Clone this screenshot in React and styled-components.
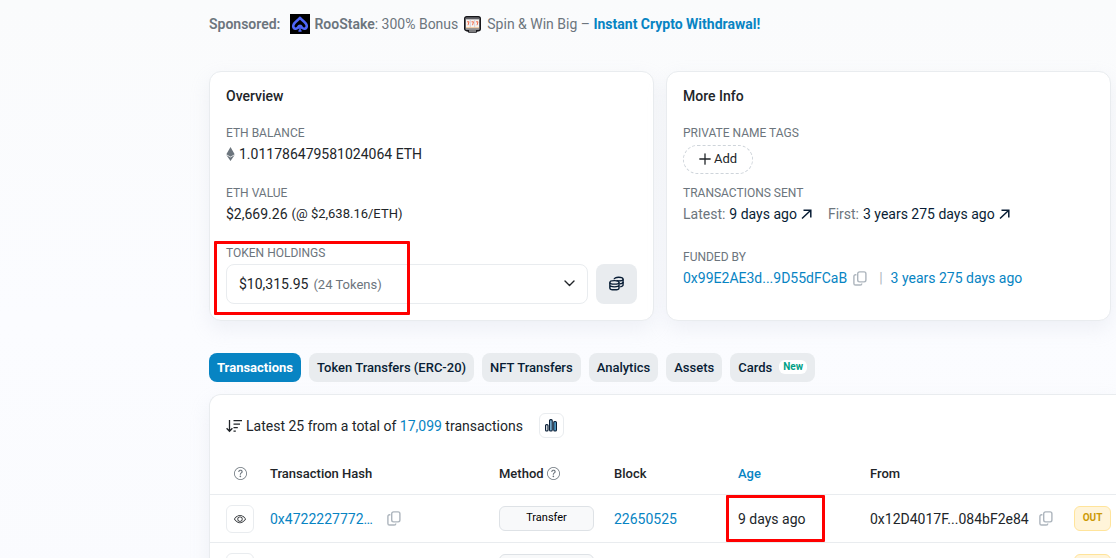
import React from 'react';
import styled, { createGlobalStyle, css } from 'styled-components';
import { FaEthereum } from 'react-icons/fa';
import { BsQuestionCircle, BsEye } from 'react-icons/bs';

const colors = {
  text: '#212529',
  dark: '#081d35',
  muted: '#6c757d',
  link: '#0784c3',
  border: '#e9ecef',
  faint: '#adb5bd',
  mark: '#ff0000',
};

const GlobalStyle = createGlobalStyle`
  * {
    box-sizing: border-box;
  }

  body {
    margin: 0;
    overflow-x: hidden;
    background: linear-gradient(#fafbfc, #fbfcff 320px, #fafbfe);
    color: ${colors.text};
    font-family: Roboto, "Liberation Sans", sans-serif;
    font-size: 14px;
    line-height: 20px;
    scrollbar-width: none;
  }

  button {
    font-family: inherit;
    color: inherit;
    cursor: pointer;
  }

  a {
    color: ${colors.link};
    text-decoration: none;
  }

  svg {
    display: block;
    flex: none;
  }
`

const Page = styled.main`
  padding: 14px 0 0 209px;
`

const Sponsored = styled.div`
  display: flex;
  align-items: center;
  gap: 4px;
  height: 20px;
  margin-bottom: 37px;
  color: ${colors.muted};
  white-space: nowrap;

  b {
    font-weight: 600;
  }

  a {
    font-weight: 700;
  }
`

const SponsorLabel = styled.b`
  margin-right: 6px;
`

const SponsorLine = styled.span`
  display: flex;
  align-items: center;
  gap: 6px;
`

const Cards = styled.div`
  display: grid;
  grid-template-columns: 1fr 1fr;
  gap: 12px;
  margin-right: 5px;
`

const panel = css`
  background: #fff;
  border: 1px solid ${colors.border};
  border-radius: 12px;
  box-shadow: 0 8px 19px rgba(189, 197, 209, 0.2);
`

const Card = styled.section`
  ${panel}
  padding: 14px 16px 16px;
`

const CardTitle = styled.h3`
  margin: 0 0 17px;
  font-size: 14px;
  font-weight: 500;
  line-height: 20px;
`

const Field = styled.div`
  position: relative;
  margin-bottom: ${({ $gap = 19 }) => $gap}px;

  &:last-child {
    margin-bottom: 0;
  }
`

const FieldLabel = styled.h4`
  margin: 0;
  color: ${colors.muted};
  font-size: 12px;
  font-weight: 400;
  line-height: 20px;
  text-transform: uppercase;
`

const Line = styled.div`
  display: flex;
  align-items: center;
  gap: ${({ $gap = 4 }) => $gap}px;
  min-height: 20px;
  white-space: nowrap;

  ${Field} & {
    margin-top: 1px;
  }
`

const EthIcon = styled(FaEthereum)`
  width: 9px;
  height: 14px;
  color: ${colors.muted};
`

const Small = styled.span`
  font-size: 13px;
`

const Muted = styled.span`
  color: ${colors.muted};
`

const TokenCount = styled(Small)`
  padding-top: 1px;
  color: ${colors.muted};
`

const DarkLink = styled.a`
  display: flex;
  align-items: center;
  gap: 4px;
  margin-right: 12px;
  color: ${colors.dark};
`

const Divider = styled.span`
  margin: 0 4px 0 8px;
  color: ${colors.faint};
`

const Holdings = styled.div`
  display: flex;
  gap: 8px;
  margin-top: 1px;
`

const Dropdown = styled.button`
  display: flex;
  flex: 1;
  align-items: center;
  gap: 5px;
  height: 40px;
  padding: 0 12px 1px;
  background: #fff;
  border: 1px solid ${colors.border};
  border-radius: 8px;
  font-size: 14px;

  svg {
    margin-left: auto;
  }
`

const WalletButton = styled.button`
  display: grid;
  place-items: center;
  width: 41px;
  height: 40px;
  padding: 0 0 2px;
  background: ${colors.border};
  border: 0;
  border-radius: 8px;
  color: ${colors.dark};
`

const AddButton = styled.button`
  display: flex;
  align-items: center;
  justify-content: center;
  gap: 3px;
  width: 70px;
  height: 29px;
  margin: 2px 0 9px;
  padding: 0 0 2px;
  background: #fff;
  border: 1px dashed #ced4da;
  border-radius: 15px;
  font-size: 13px;
`

/* red marker drawn round a value */
const Marker = styled.span`
  position: absolute;
  inset: ${({ $inset }) => $inset};
  width: ${({ $width }) => $width}px;
  border: 3px solid ${colors.mark};
  border-radius: 1px;
  pointer-events: none;
`

const Tabs = styled.nav`
  display: flex;
  gap: 8px;
  margin: 32px 0 12px;
`

const Tab = styled.button`
  display: flex;
  align-items: center;
  gap: 7px;
  height: 29px;
  padding: 0 8px 1px;
  background: ${({ $active }) => ($active ? colors.link : colors.border)};
  border: 0;
  border-radius: 8px;
  color: ${({ $active }) => ($active ? '#fff' : colors.dark)};
  font-size: 13px;
  font-weight: ${({ $active }) => ($active ? 700 : 500)};
  white-space: nowrap;
`

const NewBadge = styled.span`
  padding: 0 4px;
  background: #fff;
  border-radius: 6px;
  color: #00a186;
  font-size: 10px;
  font-weight: 700;
  line-height: 14px;
`

const TablePanel = styled.section`
  ${panel}
  border-right: 0;
  border-radius: 12px 0 0 0;
  overflow: hidden;
`

const TableHead = styled.div`
  display: flex;
  align-items: center;
  gap: 4px;
  padding: 18px 16px 15px;
  white-space: nowrap;
`

const SquareButton = styled.button`
  display: grid;
  place-items: center;
  width: ${({ $size }) => $size}px;
  height: ${({ $size }) => $size}px;
  padding: 0;
  background: #fff;
  border: 1px solid ${colors.border};
  border-radius: 6px;
`

const ChartButton = styled(SquareButton)`
  margin-left: 12px;
  color: ${colors.dark};
`

const Table = styled.table`
  width: 100%;
  table-layout: fixed;
  border-collapse: separate;
  border-spacing: 0;
  white-space: nowrap;

  th,
  td {
    padding: 0 8px;
    border-bottom: 1px solid ${colors.border};
    text-align: left;
  }

  th {
    height: 42px;
    font-size: 13px;
    font-weight: 500;
  }

  td {
    position: relative;
    height: 48px;
  }

  th:first-child,
  td:first-child {
    padding-left: 16px;
  }
`

const Col = styled.col`
  width: ${({ $width }) => $width}px;
`

const HelpCell = styled.span`
  display: grid;
  place-items: center;
  width: 28px;
  color: ${colors.muted};
`

const HeadLabel = styled.span`
  display: flex;
  align-items: center;
  gap: 3px;

  svg {
    color: ${colors.muted};
  }
`

const Method = styled.span`
  display: block;
  width: 95px;
  height: 25px;
  background: #f8f9fa;
  border: 1px solid #dee2e6;
  border-radius: 6px;
  color: #000;
  font-size: 11px;
  line-height: 22px;
  text-align: center;
`

const Direction = styled.span`
  display: block;
  width: 37px;
  height: 25px;
  background: #fff4d9;
  border: 1px solid #ffe49b;
  border-radius: 6px;
  color: #cc9a06;
  font-size: 10px;
  font-weight: 700;
  line-height: 22px;
  text-align: center;
`

const CopyButton = styled.button`
  margin-left: 2px;
  padding: 0;
  background: none;
  border: 0;
  color: ${colors.faint};
`

const SpadeLogo = () => (
  <svg width="20" height="20" viewBox="0 0 20 20" aria-hidden="true">
    <rect width="20" height="20" fill="#000" />
    <path
      d="M10 3.800C7.400 6.900 3.200 8.600 3.200 12c0 3.400 4.300 3.600 5.300.8.500-1.500 2.500-1.500 3 0 1 2.800 5.300 2.600 5.300-.8 0-3.400-4.200-5.100-6.800-8.200z"
      fill="none"
      stroke="#4f66f7"
      strokeWidth="2.600"
      strokeLinejoin="round"
    />
    <path d="M10 12.500v5.200M8.400 17h3.200" stroke="#4f66f7" strokeWidth="1.600" />
  </svg>
)

const SlotMachine = () => (
  <svg width="17" height="17" viewBox="0 0 17 17" aria-hidden="true">
    <rect x=".7" y=".7" width="15.600" height="14" rx="2" fill="#8f8f93" stroke="#16161a" strokeWidth="1.400" />
    <path d="M3 14.500h11L12.500 16.800h-8z" fill="#16161a" />
    <path d="M2 2.500h13" stroke="#5d5d63" strokeWidth="1" />
    <rect x="2" y="3.500" width="13" height="8.500" fill="#f8f4ef" />
    <path d="M6.300 3.500v8M10.700 3.500v8" stroke="#c9c5d4" strokeWidth=".8" />
    <path d="M3 5.800h2l-1 3.400M7.500 5.800h2l-1 3.400M12 5.800h2l-1 3.400" fill="none" stroke="#f0603e" strokeWidth=".9" />
    <path d="M2 11.700h13" stroke="#efb982" strokeWidth=".8" />
    <path d="M5 15h7" stroke="#fff" strokeWidth=".9" />
  </svg>
)

const PlusIcon = () => (
  <svg width="12" height="12" viewBox="0 0 12 12" aria-hidden="true">
    <path d="M6 .8v10.400M.8 6h10.400" stroke="currentColor" strokeWidth="1.300" strokeLinecap="round" />
  </svg>
)

const ArrowIcon = () => (
  <svg width="11" height="11" viewBox="0 0 11 11" aria-hidden="true">
    <path d="M1 9.500L9.500 1.500M2.500 1.200h7.300v7.300" fill="none" stroke="currentColor" strokeWidth="1.500" />
  </svg>
)

const CopyIcon = () => (
  <svg width="14" height="15" viewBox="0 0 14 15" aria-hidden="true">
    <rect x="4.700" y=".9" width="8.200" height="10" rx="1.800" fill="none" stroke="currentColor" strokeWidth="1.400" />
    <path d="M3.400 3.800H2.500A1.600 1.600 0 0 0 .9 5.400v7a1.600 1.600 0 0 0 1.600 1.600h4.700a1.600 1.600 0 0 0 1.600-1.600" fill="none" stroke="currentColor" strokeWidth="1.400" />
  </svg>
)

const ChevronIcon = () => (
  <svg width="11" height="7" viewBox="0 0 11 7" aria-hidden="true">
    <path d="M1 1l4.500 4.500L10 1" fill="none" stroke="#212529" strokeWidth="1.400" strokeLinecap="round" strokeLinejoin="round" />
  </svg>
)

const CoinsIcon = () => (
  <svg width="15" height="15" viewBox="0 0 16 16" fill="none" stroke="currentColor" strokeWidth="1.500" aria-hidden="true">
    <path d="M5.500 3.500C5.500 2.300 7.500 1.400 10.200 1.400S15 2.300 15 3.500v6c0 .9-1.200 1.600-3 1.900" />
    <path d="M8 5c.7.200 1.400.2 2.200.2 2.700 0 4.800-.7 4.800-1.700M11.500 8.400c2-.2 3.500-.9 3.500-1.900" />
    <ellipse cx="5.800" cy="6.800" rx="4.900" ry="1.900" />
    <path d="M.9 6.800v5.900c0 1.100 2.200 2 4.900 2s4.900-.9 4.900-2V6.800M.9 9.700c0 1.100 2.200 1.900 4.900 1.900s4.900-.8 4.900-1.900" />
  </svg>
)

const SortIcon = () => (
  <svg width="16" height="14" viewBox="0 0 16 14" fill="none" stroke="currentColor" strokeWidth="1.300" aria-hidden="true">
    <path d="M3.500 1v11.300M.6 9.300l2.900 3 2.900-3M7.500 1.600H16M7.500 5.100H14M7.500 8.600h4.300M7.500 12.100h2.300" />
  </svg>
)

const ChartIcon = () => (
  <svg width="12" height="13" viewBox="0 0 12 13" fill="none" stroke="currentColor" strokeWidth="1.200" aria-hidden="true">
    <rect x=".6" y="5.600" width="2.400" height="6.400" rx="1" />
    <rect x="4.600" y=".7" width="2.600" height="11.300" rx="1" fill="#8fcdf0" />
    <rect x="8.800" y="2.500" width="2.600" height="9.500" rx="1" fill="#5eb5e4" />
  </svg>
)

const Copy = () => (
  <CopyButton type="button" aria-label="Copy">
    <CopyIcon />
  </CopyButton>
)

const tabs = ['Transactions', 'Token Transfers (ERC-20)', 'NFT Transfers', 'Analytics', 'Assets', 'Cards'];

const rows = [
  { hash: '0x4722227772…', method: 'Transfer', block: '22650525', age: '9 days ago', from: '0x12D4017F...084bF2e84', marked: true },
  { method: '' },
];

const Overview = () => (
  <Card>
    <CardTitle>Overview</CardTitle>
    <Field>
      <FieldLabel>ETH Balance</FieldLabel>
      <Line>
        <EthIcon />
        <span>1.011786479581024064 ETH</span>
      </Line>
    </Field>
    <Field>
      <FieldLabel>ETH Value</FieldLabel>
      <Line>
        <span>$2,669.26</span>
        <Small>(@ $2,638.16/ETH)</Small>
      </Line>
    </Field>
    <Field>
      <FieldLabel>Token Holdings</FieldLabel>
      <Holdings>
        <Dropdown type="button" aria-haspopup="listbox">
          <span>$10,315.95</span>
          <TokenCount>(24 Tokens)</TokenCount>
          <ChevronIcon />
        </Dropdown>
        <WalletButton type="button" aria-label="View token holdings">
          <CoinsIcon />
        </WalletButton>
      </Holdings>
      <Marker $inset="-2px auto -11px -12px" $width={196} />
    </Field>
  </Card>
)

const MoreInfo = () => (
  <Card>
    <CardTitle>More Info</CardTitle>
    <Field $gap={0}>
      <FieldLabel>Private Name Tags</FieldLabel>
      <AddButton type="button">
        <PlusIcon />
        Add
      </AddButton>
    </Field>
    <Field $gap={23}>
      <FieldLabel>Transactions Sent</FieldLabel>
      <Line>
        <Muted>Latest:</Muted>
        <DarkLink href="#latest">9 days ago <ArrowIcon /></DarkLink>
        <Muted>First:</Muted>
        <DarkLink href="#first">3 years 275 days ago <ArrowIcon /></DarkLink>
      </Line>
    </Field>
    <Field>
      <FieldLabel>Funded By</FieldLabel>
      <Line>
        <a href="#funder">0x99E2AE3d...9D55dFCaB</a>
        <Copy />
        <Divider>|</Divider>
        <a href="#funding">3 years 275 days ago</a>
      </Line>
    </Field>
  </Card>
)

const Transactions = () => (
  <TablePanel>
    <TableHead>
      <SortIcon />
      <span>
        Latest 25 from a total of <a href="#all">17,099</a> transactions
      </span>
      <ChartButton type="button" $size={25} aria-label="Show chart">
        <ChartIcon />
      </ChartButton>
    </TableHead>
    <Table>
      <colgroup>
        <Col $width={52} />
        <Col $width={229} />
        <Col $width={115} />
        <Col $width={124} />
        <Col $width={132} />
        <Col $width={204} />
        <col />
      </colgroup>
      <thead>
        <tr>
          <th><HelpCell><BsQuestionCircle size={13} /></HelpCell></th>
          <th>Transaction Hash</th>
          <th><HeadLabel>Method <BsQuestionCircle size={13} /></HeadLabel></th>
          <th>Block</th>
          <th><a href="#age">Age</a></th>
          <th>From</th>
          <th></th>
        </tr>
      </thead>
      <tbody>
        {rows.map((row, i) => (
          <tr key={i}>
            <td>
              <SquareButton type="button" $size={28} aria-label="Preview">
                <BsEye size={12} />
              </SquareButton>
            </td>
            <td>
              {row.hash && <Line $gap={12}><a href="#tx">{row.hash}</a><Copy /></Line>}
            </td>
            <td><Method>{row.method}</Method></td>
            <td>{row.block && <a href="#block">{row.block}</a>}</td>
            <td>
              {row.age}
              {row.marked && <Marker $inset="0 auto 0 -4px" $width={99} />}
            </td>
            <td>
              {row.from && <Line $gap={8}><span>{row.from}</span><Copy /></Line>}
            </td>
            <td><Direction>{row.marked && 'OUT'}</Direction></td>
          </tr>
        ))}
      </tbody>
    </Table>
  </TablePanel>
)

export default function App() {
  return (
    <>
      <GlobalStyle />
      <Page>
        <Sponsored>
          <SponsorLabel>Sponsored:</SponsorLabel>
          <SpadeLogo />
          <SponsorLine>
            <span><b>RooStake</b>: 300% Bonus</span>
            <SlotMachine />
            <span>Spin &amp; Win Big – <a href="#sponsor">Instant Crypto Withdrawal!</a></span>
          </SponsorLine>
        </Sponsored>
        <Cards>
          <Overview />
          <MoreInfo />
        </Cards>
        <Tabs>
          {tabs.map((name, i) => (
            <Tab key={name} type="button" $active={i === 0}>
              {name}
              {name === 'Cards' && <NewBadge>New</NewBadge>}
            </Tab>
          ))}
        </Tabs>
        <Transactions />
      </Page>
    </>
  );
}
